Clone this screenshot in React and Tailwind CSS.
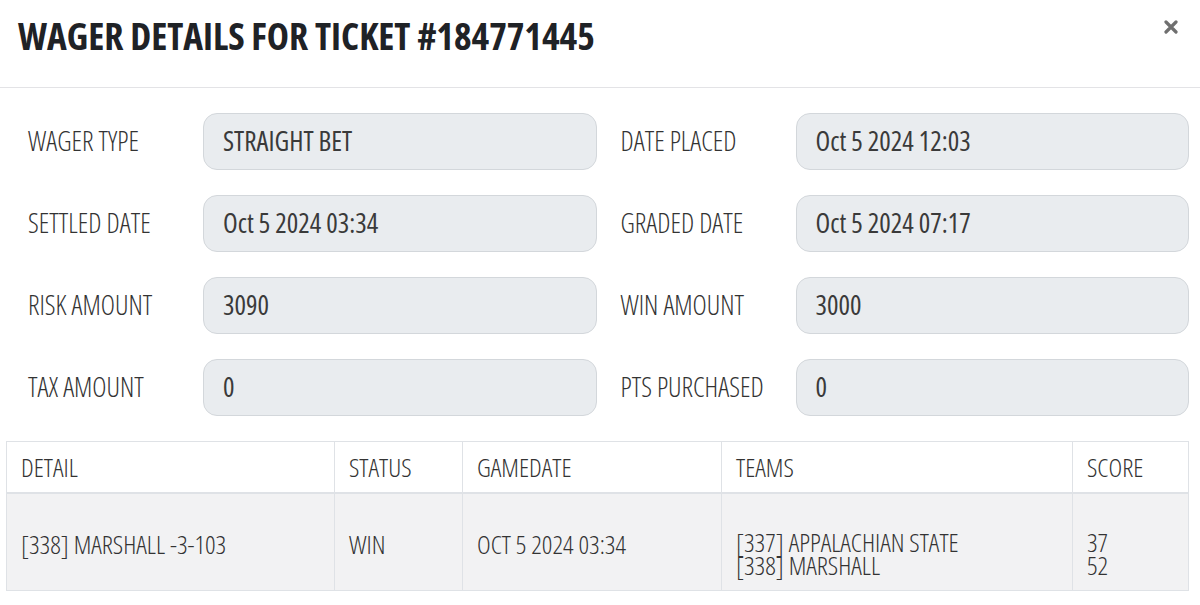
const fields = [
  ["WAGER TYPE", "STRAIGHT BET", "DATE PLACED", "Oct 5 2024 12:03"],
  ["SETTLED DATE", "Oct 5 2024 03:34", "GRADED DATE", "Oct 5 2024 07:17"],
  ["RISK AMOUNT", "3090", "WIN AMOUNT", "3000"],
  ["TAX AMOUNT", "0", "PTS PURCHASED", "0"],
];

function Field({ label, value }) {
  return (
    <div className="flex items-center h-[57px]">
      <div className="w-[197px] shrink-0 pl-[22px] text-[27px] font-light text-[#333] whitespace-nowrap">{label}</div>
      <div className="flex-1 h-[57px] rounded-[14px] bg-[#e9ecef] border border-[#d3d7db] flex items-center pl-[19px] text-[27px] font-normal text-[#3a3a3a] whitespace-nowrap">
        {value}
      </div>
    </div>
  );
}

export default function App() {
  return (
    <div className="w-[1200px] h-[605px] bg-white overflow-hidden font-['Open_Sans',sans-serif] [font-stretch:75%] text-[#333]">
      <div className="h-[88px] border-b border-[#e3e3e6] flex items-start justify-between pl-[18px] pr-[22px] pt-[17px]">
        <h1 className="text-[37.5px] leading-[38px] font-bold text-[#1f2226]">WAGER DETAILS FOR TICKET #184771445</h1>
        <svg width="14" height="14" viewBox="0 0 14 14" className="mt-[3px]">
          <path d="M2 2 L12 12 M12 2 L2 12" stroke="#6f6f6f" strokeWidth="3.2" strokeLinecap="round" />
        </svg>
      </div>
      <div className="pl-[6px] pr-[11px] pt-[25px]">
        <div className="grid grid-cols-2 gap-y-[25px]">
          {fields.map((r, i) => (
            <div key={i} className="contents">
              <div className="pr-[1px]"><Field label={r[0]} value={r[1]} /></div>
              <div className="pl-[1px]"><Field label={r[2]} value={r[3]} /></div>
            </div>
          ))}
        </div>
        <table className="mt-[25px] w-full table-fixed border-collapse border border-[#dfe2e6] text-[26px] font-light text-[#333]">
          <colgroup>
            <col className="w-[328px]" />
            <col className="w-[128px]" />
            <col className="w-[259px]" />
            <col className="w-[351px]" />
            <col />
          </colgroup>
          <thead>
            <tr className="h-[51px] bg-white border-b-2 border-[#dfe2e6]">
              {["DETAIL", "STATUS", "GAMEDATE", "TEAMS", "SCORE"].map((h) => (
                <th key={h} className="text-left font-light align-middle pl-[14px] border-l border-[#dfe2e6] leading-[40px]">{h}</th>
              ))}
            </tr>
          </thead>
          <tbody>
            <tr className="h-[98px] bg-[#f2f2f3]">
              <td className="align-top pl-[14px] pt-[30px] leading-[40px] border-l border-[#dfe2e6] whitespace-nowrap">[338] MARSHALL -3-103</td>
              <td className="align-top pl-[14px] pt-[30px] leading-[40px] border-l border-[#dfe2e6]">WIN</td>
              <td className="align-top pl-[14px] pt-[30px] leading-[40px] border-l border-[#dfe2e6] whitespace-nowrap">OCT 5 2024 03:34</td>
              <td className="align-top pl-[14px] pt-[37px] leading-[23px] border-l border-[#dfe2e6] whitespace-nowrap">
                <div>[337] APPALACHIAN STATE</div>
                <div>[338] MARSHALL</div>
              </td>
              <td className="align-top pl-[14px] pt-[37px] leading-[23px] border-l border-[#dfe2e6]">
                <div>37</div>
                <div>52</div>
              </td>
            </tr>
          </tbody>
        </table>
      </div>
    </div>
  );
}
